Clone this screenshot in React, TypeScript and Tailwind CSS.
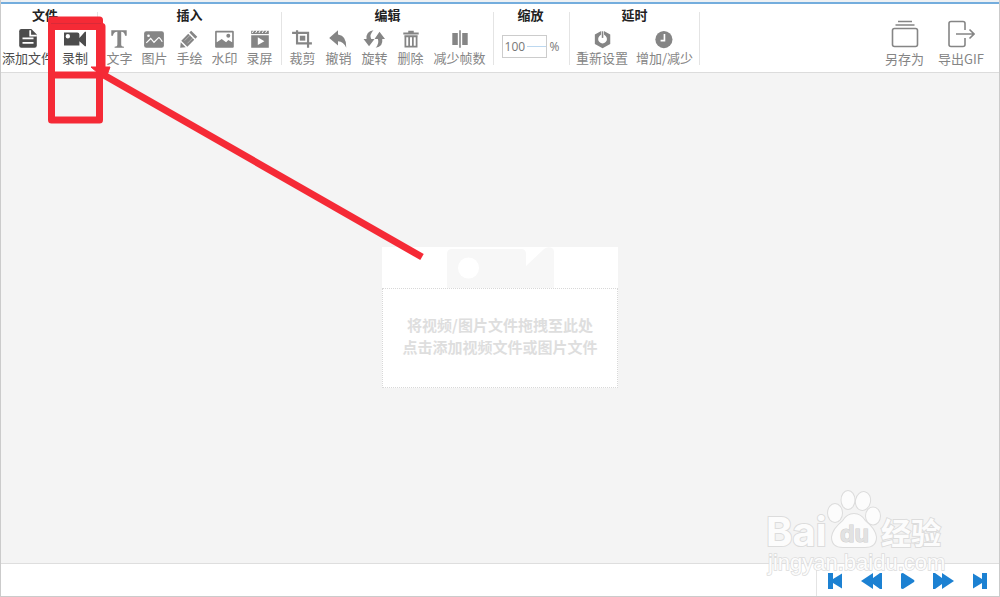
import * as React from 'react'

interface ToolProps {
  label: string
  active?: boolean
  children: React.ReactNode
}

const Tool = ({ label, active, children }: ToolProps) => (
  <button
    className={`flex flex-col items-center whitespace-nowrap ${
      active ? 'text-[#4c4c4c]' : 'text-[#858585]'
    }`}
  >
    <svg
      className="h-5 w-[22px]"
      viewBox="0 0 20 18"
      fill="currentColor"
      aria-hidden="true"
    >
      {children}
    </svg>
    <span className="text-[13px] leading-[18px]">{label}</span>
  </button>
)

interface GroupProps {
  title: string
  className?: string
  children: React.ReactNode
}

const Group = ({ title, className = '', children }: GroupProps) => (
  <section className={`flex shrink-0 flex-col items-center pt-0.5 ${className}`}>
    <h2 className="text-[13px] leading-[18px] font-bold text-[#222]">{title}</h2>
    {children}
  </section>
)

const Divider = () => <div className="h-[53px] w-px shrink-0 self-center bg-[#e4e4e4]" />

const Toolbar = () => (
  <header className="flex h-[69px] shrink-0 justify-between border-b border-[#dcdcdc] bg-white">
    <div className="flex">
      <Group title="文件" className="w-24 pr-2">
        <div className="mt-[5px] flex gap-2">
          <Tool label="添加文件" active>
            <path d="M4 0H13L18 5V15a2 2 0 0 1-2 2H4a2 2 0 0 1-2-2V2a2 2 0 0 1 2-2z" />
            <path d="M12 1V6H18M5 8.500H15M5 12.500H15" fill="none" stroke="#fff" strokeWidth="1.600" />
          </Tool>
          <Tool label="录制" active>
            <path
              fillRule="evenodd"
              d="M0 3H12Q14 3 14 5V8L19 2.500H20V15.500H19L14 11V15H0zM3.500 4.500A2 2 0 1 0 3.500 8.500A2 2 0 1 0 3.500 4.500z"
            />
          </Tool>
        </div>
      </Group>
      <Divider />
      <Group title="插入" className="w-[183px]">
        <div className="mt-[5px] flex gap-[9px]">
          <Tool label="文字">
            <path d="M3 1H17V6H15.500Q15 2.500 12 2.500V14Q12 16 14.500 16V17H6V16Q8.500 16 8.500 14V2.500Q5 2.500 4.500 6H3z" />
          </Tool>
          <Tool label="图片">
            <rect x="1" y="2" width="18" height="15" rx="2" />
            <path
              d="M3 12.500L7 8.500L10 12L14 8Q15 7 17.500 11.500"
              fill="none"
              stroke="#fff"
              strokeWidth="1.1"
            />
            <circle cx="5" cy="6" r="1.2" fill="#fff" />
          </Tool>
          <Tool label="手绘">
            <path d="M12 1.500L17.500 7L15.800 8.700L10.300 3.200zM9.300 4.200L14.800 9.700L8.500 16L3 10.500zM2.500 12L7 16.500L2 17z" />
            <path d="M6 10.500L11 5.500M8.500 13L13.500 8" stroke="#bbb" strokeWidth=".8" />
          </Tool>
          <Tool label="水印">
            <path
              fillRule="evenodd"
              d="M2 1.500H17Q18 1.500 18 2.500V16Q18 17 17 17H2Q1 17 1 16V2.500Q1 1.500 2 1.500zM2.500 3V12L7 9L11 12L13 10L16.500 12V3z"
            />
            <circle cx="13" cy="6" r="1.8" />
          </Tool>
          <Tool label="录屏">
            <path
              fillRule="evenodd"
              d="M2 5.500H18V17H2zM8 7.500V14.500L14 11z"
            />
            <path d="M2 1.500H18V4.500H2z" />
            <path
              d="M3 3.500L4.500 1M6 3.500L7.500 1M9 3.500L10.500 1M12 3.500L13.500 1M15 3.500L16.500 1"
              stroke="#fff"
              strokeWidth=".9"
            />
          </Tool>
        </div>
      </Group>
      <Divider />
      <Group title="编辑" className="w-[211px]">
        <div className="mt-[5px] flex gap-2.5">
          <Tool label="裁剪">
            <path
              d="M1 3.500H15.500V17M5.500 1V13H19"
              fill="none"
              stroke="currentColor"
              strokeWidth="2"
            />
            <path d="M8 6H13V10.500H8z" />
          </Tool>
          <Tool label="撤销">
            <path d="M2 8L10 1V5Q18 6 17.500 17Q15 11 10 11V15z" />
          </Tool>
          <Tool label="旋转">
            <path d="M9.500 1Q2.500 2 3.200 9H0.500L5.500 15.500L10.500 9H7.500Q5.500 5 9.500 1z" />
            <path d="M11.500 17Q18.500 16 17.500 9H20L15 2.500L10.500 9H13.500Q15 13 11.500 17z" />
          </Tool>
          <Tool label="删除">
            <path d="M3 3H7.500V1.500H12.500V3H17V5H3z" />
            <path
              d="M4.900 6V16H15.100V6M8.300 6V16M11.700 6V16M4 6.500H16"
              fill="none"
              stroke="currentColor"
              strokeWidth="1.6"
            />
          </Tool>
          <Tool label="减少帧数">
            <path d="M3 3.500H8V14.500H3zM12 3.500H17V14.500H12zM9.300 1H10.700V17H9.300z" />
          </Tool>
        </div>
      </Group>
      <Divider />
      <Group title="缩放" className="w-[75px] pr-0.5">
        <div className="mt-[11px] flex items-center gap-[3px] text-xs text-[#777]">
          <div className="flex h-[23px] w-[45px] items-center border border-[#ccc]">
            <input
              type="text"
              defaultValue="100"
              aria-label="缩放"
              className="w-6 min-w-0 pl-0.5 font-['Open_Sans'] text-xs outline-none"
            />
            <span className="h-px flex-1 bg-[#bcd8f0]" />
          </div>
          <span className="font-['Open_Sans']">%</span>
        </div>
      </Group>
      <Divider />
      <Group title="延时" className="w-[129px]">
        <div className="mt-[5px] flex gap-2">
          <Tool label="重新设置">
            <path
              fillRule="evenodd"
              d="M10.500 1L17.500 5V13.500L10.500 17.500L3.500 13.500V5zM10.500 5A4 4 0 1 0 10.500 13A4 4 0 1 0 10.500 5z"
            />
            <path d="M9.200 0H11.800V5.500H9.200z" fill="#fff" />
            <path d="M9.800 2H11.200V8H9.800z" />
          </Tool>
          <Tool label="增加/减少">
            <circle cx="9" cy="9.500" r="7.800" />
            <path d="M9.500 4.500V10.500H6" fill="none" stroke="#fff" strokeWidth="1.5" />
          </Tool>
        </div>
      </Group>
      <Divider />
    </div>

    <div className="flex gap-[14px] pt-4 pr-[15px] text-[13px] leading-[18px] text-[#858585]">
      <button className="flex flex-col items-center gap-0.5">
        <svg
          width="28"
          height="28"
          viewBox="0 0 28 28"
          fill="none"
          stroke="currentColor"
          strokeWidth="1.600"
          aria-hidden="true"
        >
          <path d="M7 1.500H21M4.500 5H23.500" />
          <rect x="1.500" y="8.500" width="25" height="18" rx="2" />
        </svg>
        另存为
      </button>
      <button className="flex flex-col items-center gap-0.5">
        <svg
          width="28"
          height="28"
          viewBox="0 0 28 28"
          fill="none"
          stroke="currentColor"
          strokeWidth="1.600"
          aria-hidden="true"
        >
          <path d="M18 10V3.500Q18 1.500 16 1.500H4Q2 1.500 2 3.500V24.500Q2 26.500 4 26.500H16Q18 26.500 18 24.500V18M9 14H27M22.500 9.500L27 14L22.500 18.500" />
        </svg>
        导出GIF
      </button>
    </div>
  </header>
)

const DropZone = () => (
  <button className="flex w-[236px] flex-col items-stretch bg-white text-[15px] font-bold text-[#dedede]">
    <svg
      className="h-[41px] w-full"
      viewBox="0 0 236 41"
      fill="#f7f7f7"
      aria-hidden="true"
    >
      <path d="M65 41V7Q65 2 70 2H139Q144 2 144 7V19L162 2Q166 -1 170 1Q172 2 172 5V41z" />
      <circle cx="86.500" cy="21" r="10.500" fill="#fff" />
    </svg>
    <span className="flex h-[100px] flex-col justify-center border border-dotted border-[#d8d8d8] pb-1 leading-[22px]">
      <span>将视频/图片文件拖拽至此处</span>
      <span>点击添加视频文件或图片文件</span>
    </span>
  </button>
)

const playerButtons = [
  { label: '第一帧', path: 'M3 2H8V8L17 2.500V17.500L8 12V18H3z' },
  { label: '上一帧', path: 'M0 10L12 2V7L19 2H21V18H19L12 13V18z' },
  { label: '播放', path: 'M4 3Q4 2 6 2L17 9Q18 10 17 11L6 18Q4 18 4 17z' },
  { label: '下一帧', path: 'M21 10L9 2V7L2 2H0V18H2L9 13V18z' },
  { label: '最后一帧', path: 'M18 2H13V8L4 2.500V17.500L13 12V18H18z' },
]

const Player = () => (
  <footer className="flex h-[33px] shrink-0 justify-end border-t border-[#dedede] bg-white">
    <div className="mt-0.5 flex items-center border-l border-[#e4e4e4] pr-0.5">
      {playerButtons.map((button) => (
        <button
          key={button.label}
          aria-label={button.label}
          className="flex w-9 justify-center text-[#1c81d2]"
        >
          <svg width="21" height="20" viewBox="0 0 21 20" fill="currentColor">
            <path d={button.path} />
          </svg>
        </button>
      ))}
    </div>
  </footer>
)

const Watermark = () => (
  <svg
    className="pointer-events-none absolute right-[47px] bottom-[15px]"
    width="186"
    height="94"
    viewBox="0 0 186 94"
    fill="#fcfcfc"
    stroke="#dcdcdc"
    strokeWidth="2"
    aria-hidden="true"
    style={{ paintOrder: 'stroke' }}
  >
    <ellipse cx="69" cy="26" rx="7" ry="9" />
    <ellipse cx="82" cy="13" rx="6.500" ry="9" />
    <ellipse cx="97" cy="14" rx="7" ry="9" transform="rotate(12 97 14)" />
    <ellipse cx="107" cy="29" rx="7" ry="8.500" />
    <path d="M88 27Q95 27 99 34Q109 42 110 50Q110 60 99 60H77Q66 60 66 50Q67 42 77 34Q81 27 88 27z" />
    <g fontFamily="Inter, sans-serif" fontWeight="700">
      <text x="0" y="59" fontSize="40">
        Bai
      </text>
      <text x="74" y="55" fontSize="23" fill="#e2e2e2" stroke="#cfcfcf" strokeWidth="1">
        du
      </text>
    </g>
    <text x="115" y="57" fontSize="30" fontWeight="700">
      经验
    </text>
    <text
      x="2"
      y="83"
      fontSize="22"
      fontFamily="Liberation Sans, sans-serif"
      strokeWidth="1.500"
    >
      jingyan.baidu.com
    </text>
  </svg>
)

// red frame round the record button with an arrow from the drop zone
const Marker = () => (
  <svg
    className="pointer-events-none absolute top-0 left-0"
    width="440"
    height="270"
    viewBox="1 0 440 270"
    fill="none"
    stroke="#f52a36"
    strokeWidth="7"
    strokeLinejoin="round"
    aria-hidden="true"
  >
    <rect x="51.500" y="20" width="48" height="100" />
    <path d="M51.500 26.500H102V75H51.500" />
    <path d="M51 23.500H101" stroke="#d92a38" strokeWidth="1" />
    <path d="M102 74L422 257" />
    <path d="M91 67H110L106 78L98 73z" fill="#f52a36" strokeWidth="1" />
  </svg>
)

const App = () => (
  <div className="relative flex h-screen flex-col overflow-hidden border-x border-b border-[#cbcbcb] bg-[#f4f4f4] font-['Noto_Sans_CJK_SC',sans-serif]">
    <div className="h-1 shrink-0 border-b-2 border-[#74addd] bg-[#eef1f4]" />
    <Toolbar />
    <main className="flex flex-1 items-center justify-center pb-0.5">
      <DropZone />
    </main>
    <Player />
    <Watermark />
    <Marker />
  </div>
)

export default App
